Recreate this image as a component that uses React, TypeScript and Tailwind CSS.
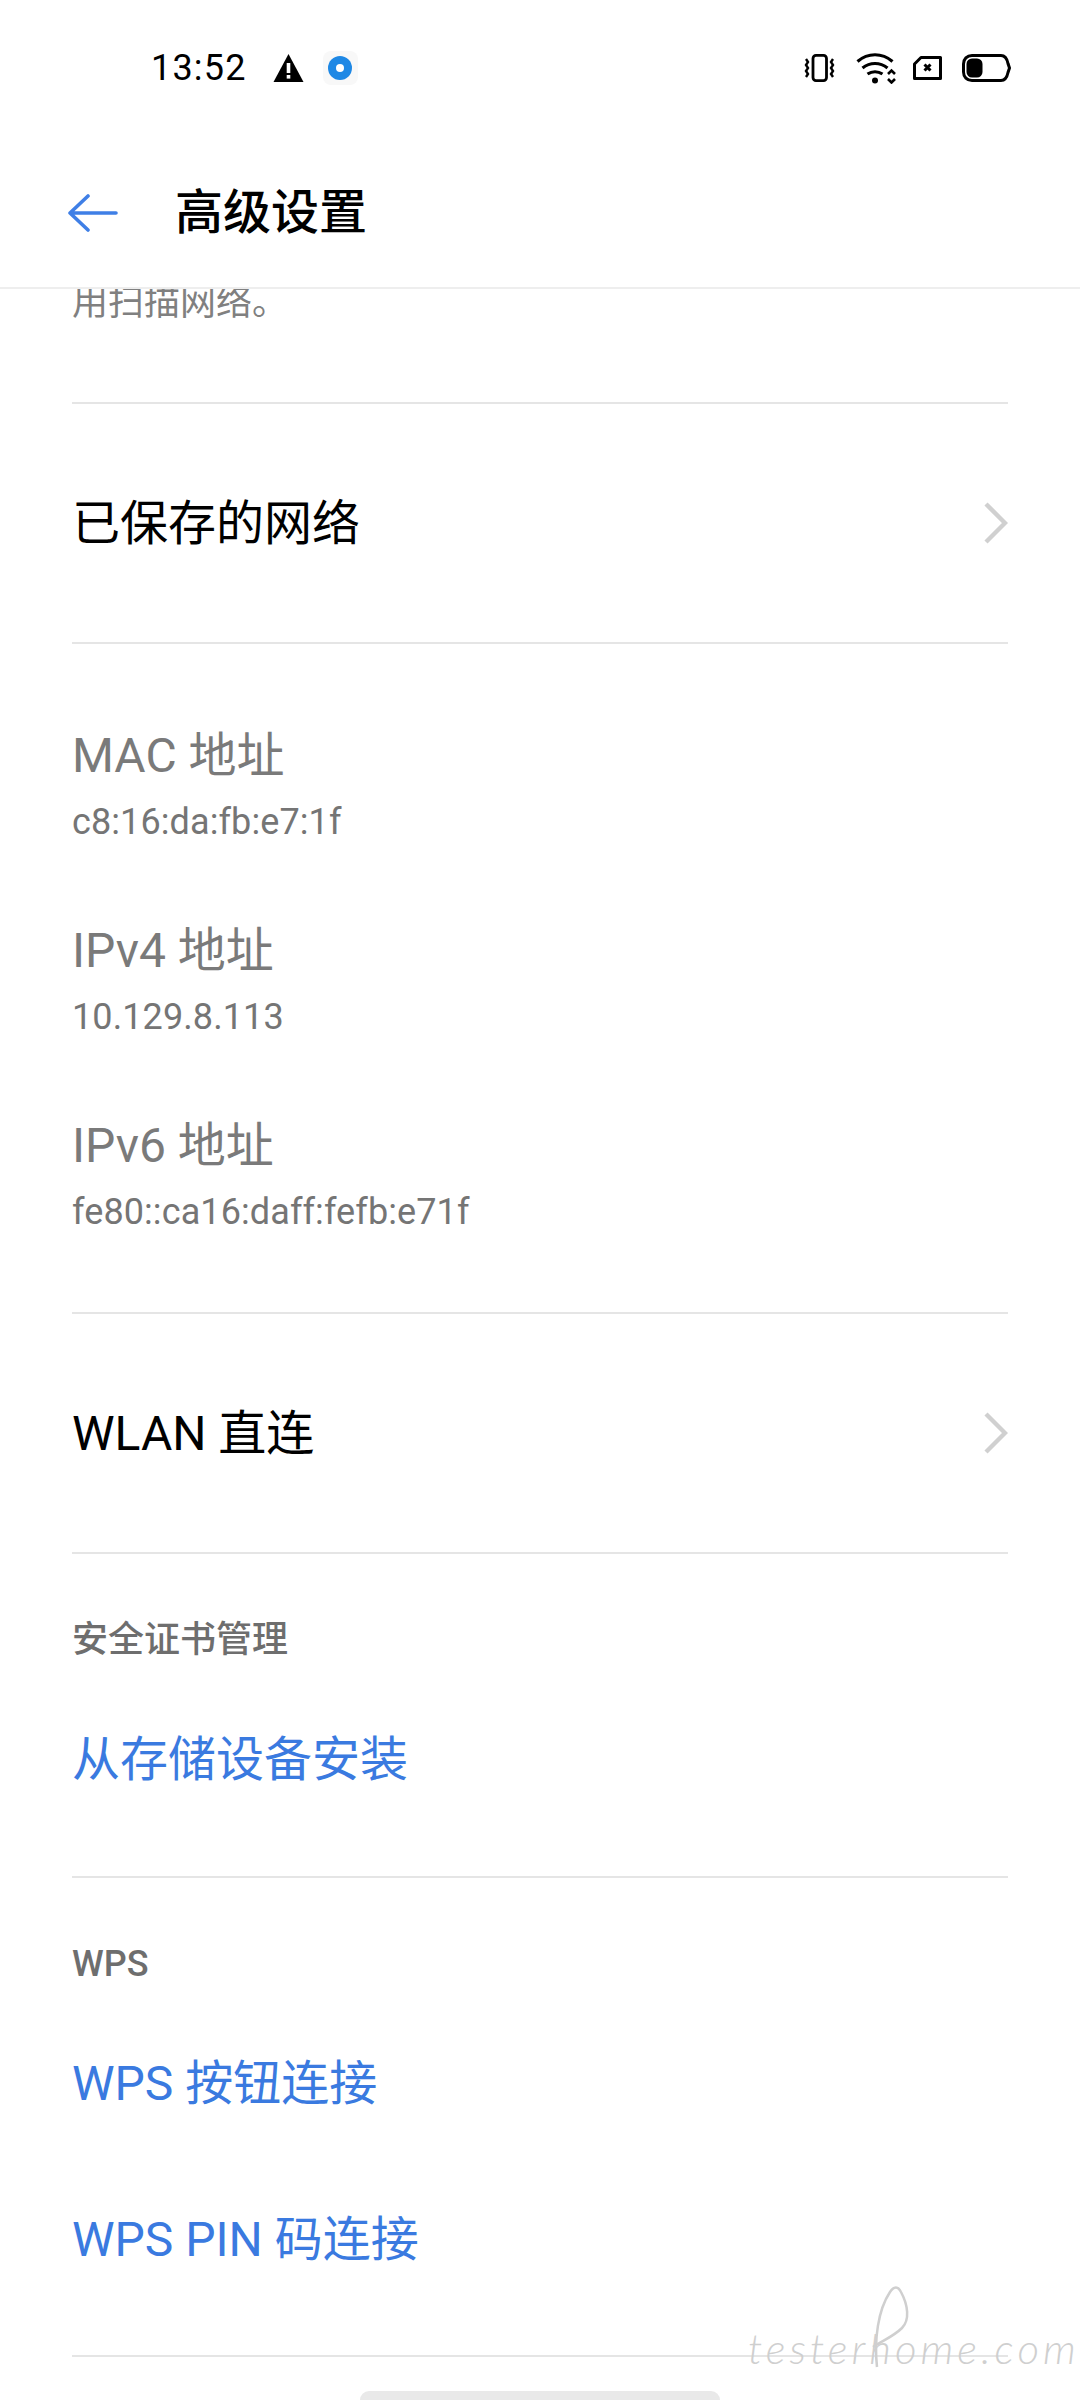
const FONT = "font-['Roboto','Noto_Sans_CJK_SC',sans-serif]";

function Divider() {
  return <div className="mx-[72px] h-[2px] bg-[#e5e5e5]" />;
}

function NavRow({ label }: { label: string }) {
  return (
    <div className="flex h-[238px] items-center justify-between pl-[72px] pr-[72px]">
      <span className="pt-[2px] text-[48px] leading-[64px] text-black">{label}</span>
      <svg width="24" height="42" viewBox="0 0 24 42" fill="none" stroke="#d0d0d0" strokeWidth="4.4">
        <path d="M2 2l19 19L2 40" />
      </svg>
    </div>
  );
}

function InfoRow({ label, value }: { label: string; value: string }) {
  return (
    <div className="flex h-[195px] flex-col px-[72px] pt-[30px]">
      <span className="text-[48px] leading-[64px] text-[#7a7a7a]">{label}</span>
      <span className="mt-[10px] text-[36px] leading-[48px] tracking-[0.1px] text-[#757575]">{value}</span>
    </div>
  );
}

function SectionLabel({ label }: { label: string }) {
  return (
    <div className="px-[72px] pb-[18px] pt-[62px] text-[36px] font-medium leading-[48px] text-[#6e6e6e]">
      {label}
    </div>
  );
}

function LinkRow({ label }: { label: string }) {
  return (
    <div className="flex h-[156px] items-center px-[72px] text-[48px] leading-[64px] text-[#3a7ae0]">
      {label}
    </div>
  );
}

function StatusIcons() {
  return (
    <div className="flex items-center">
      <svg width="31" height="28" viewBox="0 0 31 28" fill="none" stroke="black" strokeWidth="2.8">
        <rect x="9" y="1.4" width="13.5" height="25.2" rx="3" />
        <path d="M2 5l2 3-2 3 2 3-2 3 2 3-2 3M29 5l-2 3 2 3-2 3 2 3-2 3 2 3" strokeWidth="2.4" />
      </svg>
      <svg width="41" height="31" viewBox="0 0 41 31" fill="none" stroke="black" strokeWidth="3.2" className="ml-[21px]">
        <path d="M1.5 8.5c10.500-9 24.500-9 35 0M6.500 15c7.500-6 17.500-6 25 0M11.500 21c4.500-3 10.500-3 15 0" />
        <circle cx="19" cy="27.500" r="3" fill="black" stroke="none" />
        <path d="M32 21l3.500-3.500L39 21M32 26l3.500 3.500L39 26" strokeWidth="2.600" />
      </svg>
      <svg width="29" height="24" viewBox="0 0 29 24" fill="none" stroke="black" strokeWidth="3" className="ml-[16px]">
        <path d="M8 1.500h19.500v21h-26V8z" strokeLinejoin="round" />
        <path d="M11.500 8.500l6 6M17.500 8.500l-6 6" />
      </svg>
      <svg width="49" height="28" viewBox="0 0 49 28" fill="none" className="ml-[20px]">
        <path d="M10 1.500h29c4 0 6 3 7 8l1.500 4.500-1.500 4.500c-1 5-3 8-7 8H10c-5 0-8.500-3.500-8.500-8.500v-8C1.500 5 5 1.500 10 1.500z" stroke="black" strokeWidth="3" />
        <rect x="4.500" y="4.500" width="16" height="19" rx="5.500" fill="black" />
      </svg>
    </div>
  );
}

export default function App() {
  return (
    <div className={`relative h-[2400px] w-[1080px] overflow-hidden bg-white ${FONT}`}>
      <header className="relative z-10 h-[289px] border-b-2 border-[#eeeeee] bg-white">
        <div className="flex h-[136px] items-center justify-between pl-[151px] pr-[69px]">
          <div className="flex items-center">
            <span className="text-[36px] leading-[48px] tracking-[1.2px] text-black">13:52</span>
            <svg width="31" height="28" viewBox="0 0 30 28" className="ml-[26px]">
              <path d="M15 0L30 28H0z" fill="black" />
              <rect x="13.200" y="9" width="3.600" height="10" fill="white" />
              <rect x="13.200" y="21" width="3.600" height="3.600" fill="white" />
            </svg>
            <div className="ml-[19px] flex h-[34px] w-[35px] items-center justify-center rounded-[8px] bg-[#f8f8f8]">
              <div className="flex h-[24px] w-[24px] items-center justify-center rounded-full bg-[#1e88e5]">
                <div className="h-[8px] w-[8px] rounded-full bg-white" />
              </div>
            </div>
          </div>
          <StatusIcons />
        </div>
        <div className="flex h-[152px] items-center pl-[68px] pt-[2px]">
          <svg width="50" height="38" viewBox="0 0 50 38" fill="none" stroke="#3f7fe6" strokeWidth="3.600" strokeLinecap="round" strokeLinejoin="round">
            <path d="M48 19H2M20 2L2 19l18 17" />
          </svg>
          <h1 className="ml-[57px] text-[48px] font-medium leading-[64px] text-black">高级设置</h1>
        </div>
      </header>

      <main>
        <div className="-mt-[10px] px-[72px] text-[36px] leading-[48px] text-[#808080]">用扫描网络。</div>
        <div className="h-[75px]" />
        <Divider />
        <NavRow label="已保存的网络" />
        <Divider />
        <div className="pt-[50px]">
          <InfoRow label="MAC 地址" value="c8:16:da:fb:e7:1f" />
          <InfoRow label="IPv4 地址" value="10.129.8.113" />
          <InfoRow label="IPv6 地址" value="fe80::ca16:daff:fefb:e71f" />
        </div>
        <div className="h-[33px]" />
        <Divider />
        <NavRow label="WLAN 直连" />
        <Divider />
        <SectionLabel label="安全证书管理" />
        <LinkRow label="从存储设备安装" />
        <div className="h-[38px]" />
        <Divider />
        <SectionLabel label="WPS" />
        <LinkRow label="WPS 按钮连接" />
        <LinkRow label="WPS PIN 码连接" />
        <div className="h-[37px]" />
        <Divider />
      </main>

      {/* watermark sits over the last divider */}
      <span className="absolute left-[748px] top-[2318px] font-['Lato',sans-serif] text-[42px] font-light italic leading-[60px] tracking-[4px] text-[#cfcfcf]">
        testerhome.com
      </span>
      <svg width="55" height="95" viewBox="0 0 55 95" fill="none" stroke="#cfcfcf" strokeWidth="2.500" className="absolute left-[860px] top-[2280px]">
        <path d="M17 87C14 60 18 30 30 12c4-6 8-6 11 0 7 13 9 28 1 36-8 8-18 12-29 19" />
      </svg>
      <div className="absolute bottom-0 left-[360px] h-[9px] w-[360px] rounded-t-full bg-[#e9e9e9]" />
    </div>
  );
}
